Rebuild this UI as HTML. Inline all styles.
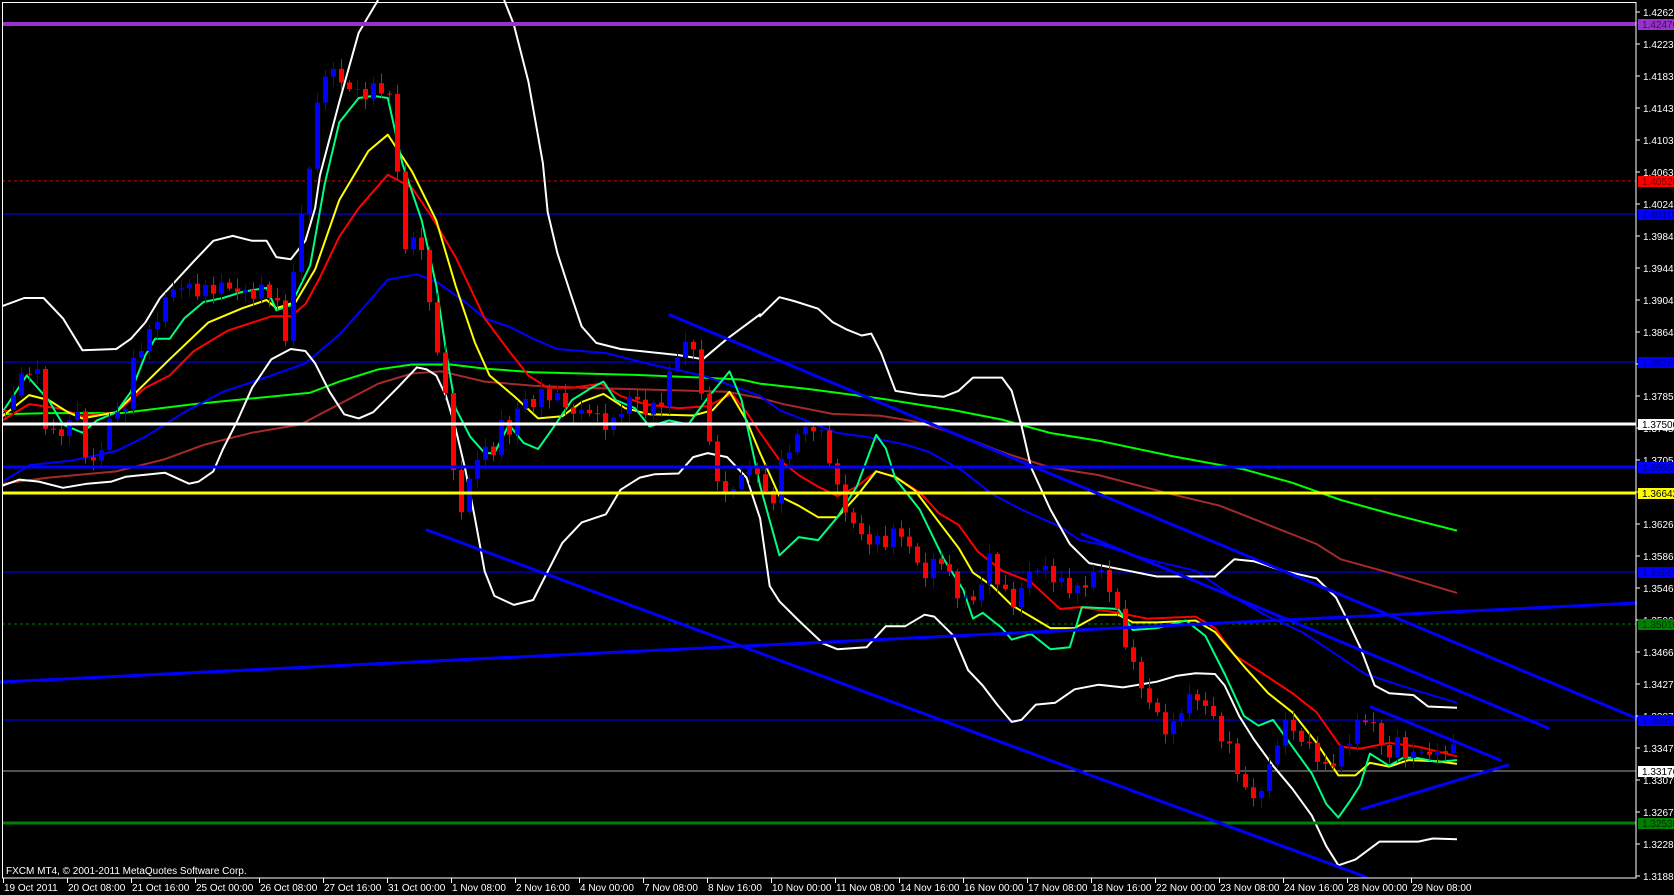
<!DOCTYPE html>
<html><head><meta charset="utf-8"><style>
html,body{margin:0;padding:0;background:#000;width:1674px;height:895px;overflow:hidden}
svg{display:block}
text{font-family:"Liberation Sans",sans-serif;font-size:10px}
</style></head><body>
<svg id="s" width="1674" height="895" xmlns="http://www.w3.org/2000/svg">
<rect x="0" y="0" width="1674" height="895" fill="#000"/>
<g id="hl">
<line x1="2" y1="181" x2="1636" y2="181" stroke="#e00000" stroke-width="1" stroke-dasharray="3,3"/>
<line x1="2" y1="214" x2="1636" y2="214" stroke="#0000ff" stroke-width="1"/>
<line x1="2" y1="362" x2="1636" y2="362" stroke="#0000ff" stroke-width="1"/>
<line x1="2" y1="572" x2="1636" y2="572" stroke="#0000ff" stroke-width="1"/>
<line x1="2" y1="624" x2="1636" y2="624" stroke="#008000" stroke-width="1" stroke-dasharray="3,3"/>
<line x1="2" y1="720" x2="1636" y2="720" stroke="#0000ff" stroke-width="1"/>
<line x1="2" y1="771" x2="1636" y2="771" stroke="#a0a0a0" stroke-width="1"/>
</g>
<g id="ind"></g>
<g id="cnd"></g>
<g id="thick">
<line x1="2" y1="24" x2="1636" y2="24" stroke="#9932cc" stroke-width="4"/>
<line x1="2" y1="424" x2="1636" y2="424" stroke="#ffffff" stroke-width="3"/>
<line x1="2" y1="467" x2="1636" y2="467" stroke="#0000ff" stroke-width="3"/>
<line x1="2" y1="493" x2="1636" y2="493" stroke="#ffff00" stroke-width="3"/>
<line x1="2" y1="823" x2="1636" y2="823" stroke="#008000" stroke-width="3"/>
</g>
<g id="tl" stroke="#0000ff" stroke-width="3" stroke-linecap="round">
<line x1="427" y1="530" x2="1366" y2="877"/>
<line x1="670" y1="315" x2="1636" y2="718"/>
<line x1="1082" y1="534" x2="1548" y2="728"/>
<line x1="0" y1="682" x2="1636" y2="603"/>
<line x1="1371" y1="707" x2="1500" y2="760"/>
<line x1="1362" y1="809" x2="1508" y2="765"/>
</g>
<rect x="2.5" y="2.5" width="1633.5" height="875.5" fill="none" stroke="#fff" stroke-width="1"/>
<g id="ax" fill="#fff"></g>
<text x="6" y="874" fill="#fff">FXCM MT4, © 2001-2011 MetaQuotes Software Corp.</text>
</svg>
<script>
var NS="http://www.w3.org/2000/svg";
function el(p,t,a,txt){var e=document.createElementNS(NS,t);for(var k in a)e.setAttribute(k,a[k]);if(txt!=null)e.textContent=txt;document.getElementById(p).appendChild(e);return e;}
function z6(a){var r=[];for(var i=0;i<a.length;i+=2)r.push([a[i]/2.063,a[i+1]/2.45]);return r;}
function z7(a){var r=[];for(var i=0;i<a.length;i+=2)r.push([760+a[i]/2.066,280+a[i+1]/2.614]);return r;}
function line(pts,col,w){el("ind","polyline",{points:pts.map(function(p){return p[0].toFixed(1)+","+p[1].toFixed(1)}).join(" "),fill:"none",stroke:col,"stroke-width":w,"stroke-linejoin":"round"});}
line(z6([5,1015,100,1012,250,1012,400,990,640,962,700,935,780,905,850,893,930,893,1000,903,1100,912,1300,918,1450,925,1530,930,1568,940]).concat(z7([100,285,250,310,400,340,500,365,600,400,700,420,850,460,1000,495,1100,530,1200,575,1300,610,1440,655])),"#00ff00",2);
line(z6([5,1185,100,1170,240,1155,340,1125,420,1090,520,1060,620,1040,700,990,780,940,850,915,910,910,1000,935,1100,945,1200,950,1350,955,1500,960,1568,975]).concat(z7([50,325,150,350,250,355,320,370,400,400,500,450,600,490,700,510,850,560,950,590,1050,640,1150,690,1200,730,1300,765,1440,818])),"#a52a2a",2);
line(z6([5,1180,60,1140,150,1128,240,1105,300,1070,380,1010,460,960,560,920,630,890,700,820,760,740,800,685,860,672,900,690,960,740,1000,780,1050,800,1100,830,1150,855,1250,865,1350,895,1450,920,1568,970]).concat(z7([40,340,100,370,160,400,220,410,300,430,350,450,420,500,480,560,540,600,620,645,660,680,700,690,800,730,900,760,980,830,1050,880,1120,920,1180,970,1250,1030,1300,1050,1360,1075,1440,1105])),"#0000ff",2);
line(z6([5,750,50,730,90,730,130,780,170,858,240,855,270,830,300,790,330,730,400,640,440,590,480,578,520,590,550,590,570,630,600,635,630,590,650,510,660,430,700,250,740,80,780,0]),"#fff",2);
line(z6([1040,0,1060,60,1090,200,1120,400,1130,520,1150,620,1180,730,1200,800,1230,840,1280,855,1400,870,1450,880,1500,830,1568,770]).concat(z7([0,95,40,45,70,55,120,75,150,110,180,130,210,145,230,140,250,190,280,290,330,300,380,305,410,290,440,255,500,255,520,290,540,380,560,490,600,600,640,690,680,740,760,760,820,775,940,775,980,730,1020,735,1080,760,1150,780,1190,830,1210,880,1240,960,1270,1060,1300,1080,1350,1085,1380,1115,1440,1118])),"#fff",2);
line(z6([5,1190,40,1175,80,1180,130,1195,180,1185,230,1180,260,1168,340,1158,390,1185,410,1180,440,1155,460,1100,490,1030,520,950,560,880,600,855,630,860,650,890,680,960,710,1015,740,1025,770,1010,820,950,860,900,880,905,900,920,920,970,940,1050,960,1150,980,1270,1000,1400,1020,1460,1060,1482,1100,1470,1130,1400,1160,1330,1200,1280,1250,1260,1280,1200,1320,1170,1350,1162,1400,1160,1430,1120,1460,1110,1500,1120,1540,1170,1568,1270]).concat(z7([20,800,40,840,80,890,130,950,160,965,220,960,260,905,300,905,340,875,360,880,400,930,430,1020,460,1060,490,1110,520,1155,540,1150,570,1110,610,1105,650,1070,700,1058,750,1065,820,1050,860,1035,900,1028,940,1030,960,1060,990,1140,1020,1200,1060,1270,1100,1330,1140,1400,1170,1480,1195,1530,1230,1515,1280,1468,1360,1468,1390,1460,1440,1462])),"#fff",2);
line(z6([5,1030,60,990,120,1000,170,1020,240,1010,300,950,350,920,400,860,470,810,560,775,600,775,630,745,660,680,700,580,740,510,800,428,850,460,890,530,940,630,1000,780,1050,860,1090,920,1130,950,1180,950,1240,940,1280,970,1330,990,1400,1000,1460,995,1510,965,1540,1010,1568,1060]).concat(z7([40,470,80,510,120,540,160,565,200,540,240,500,280,515,330,555,370,610,410,640,450,710,500,760,560,790,620,860,660,855,740,870,800,885,900,880,940,910,980,980,1040,1030,1100,1080,1150,1130,1200,1220,1240,1225,1300,1210,1360,1220,1440,1245])),"#ff0000",2);
line(z6([5,1020,60,968,100,980,140,1010,170,1025,240,1010,290,950,350,880,430,790,500,755,550,735,570,755,610,740,650,660,700,490,760,370,800,330,850,420,900,540,940,700,980,840,1010,920,1060,970,1110,1025,1160,1020,1200,985,1245,965,1290,1000,1340,1015,1430,1018,1470,1005,1505,960,1540,1030,1568,1110]).concat(z7([40,565,80,590,120,620,160,620,200,565,240,500,280,515,320,550,350,600,380,650,410,700,440,765,480,800,520,850,560,880,600,910,650,910,700,875,740,875,770,895,820,895,900,890,940,920,1000,1010,1050,1080,1100,1130,1150,1210,1195,1295,1230,1295,1260,1262,1300,1272,1340,1255,1400,1258,1440,1265])),"#ffff00",2);
line(z6([5,1010,55,920,100,980,130,1040,170,1060,200,1030,240,1010,270,960,300,870,320,830,350,830,380,780,420,740,460,730,500,715,550,705,570,760,600,748,640,650,670,450,700,300,740,240,770,235,800,240,830,400,870,540,900,700,920,860,940,1000,970,1070,1000,1110,1020,1110,1050,1040,1080,1085,1110,1100,1140,1050,1180,980,1220,950,1245,935,1270,980,1310,1000,1340,1045,1380,1030,1420,1040,1460,975,1505,910,1530,980,1568,1190]).concat(z7([40,720,80,672,120,680,160,620,200,540,240,405,260,440,280,520,330,600,380,730,420,810,440,885,460,870,500,910,520,940,560,925,600,965,640,960,665,855,740,860,770,915,820,910,880,890,920,930,960,1030,1000,1140,1030,1165,1060,1150,1100,1220,1140,1290,1170,1370,1195,1405,1220,1360,1240,1320,1260,1238,1300,1270,1330,1248,1360,1250,1400,1260,1440,1255])),"#00ff7f",2);
var P=[5,410,25,375,35,360,45,420,60,440,75,410,90,470,110,420,125,410,135,350,150,330,160,310,175,290,190,285,210,290,230,290,260,290,275,300,285,340,295,250,305,190,315,120,325,75,335,75,350,85,365,95,385,90,395,110,400,250,410,240,420,240,430,320,440,360,450,430,458,520,470,480,480,450,490,460,500,420,510,430,520,400,530,410,545,390,560,395,575,420,590,410,600,420,615,420,630,400,645,410,660,400,675,360,690,340,700,380,710,450,725,500,740,480,755,460,770,510,780,470,800,430,810,420,825,440,835,490,850,520,870,540,885,545,900,530,912,550,925,575,940,560,955,590,975,600,990,560,1000,590,1015,600,1030,570,1050,575,1070,585,1085,590,1095,570,1110,585,1125,640,1140,690,1160,720,1170,730,1185,700,1205,705,1215,720,1230,750,1245,795,1255,800,1265,780,1275,740,1290,720,1300,750,1310,740,1320,765,1335,760,1345,750,1360,720,1372,715,1385,760,1395,745,1410,760,1420,745,1435,755,1450,750,1458,760];
function pv(x){for(var i=0;i<P.length-2;i+=2){if(x<=P[i+2]){var t=(x-P[i])/(P[i+2]-P[i]);return P[i+1]+t*(P[i+3]-P[i+1]);}}return P[P.length-1];}
(function(){
var prev=pv(5);
for(var i=0;i<=181;i++){var x=5+8*i;var c=pv(x)+6*Math.sin(i*2.7)+4*Math.sin(i*5.3);var o=prev;prev=c;
var tp=Math.min(o,c),bt=Math.max(o,c);var hi=tp-2-8*Math.abs(Math.sin(i*1.9));var lo=bt+2+8*Math.abs(Math.cos(i*2.3));
var col=c<o?"#0000ff":"#ff0000";
el("cnd","line",{x1:x+0.5,y1:hi.toFixed(1),x2:x+0.5,y2:lo.toFixed(1),stroke:col,"stroke-width":1});
el("cnd","rect",{x:x-2,y:tp.toFixed(1),width:5,height:Math.max(1,bt-tp).toFixed(1),fill:col});}
var L=["1.42620","1.42230","1.41830","1.41430","1.41030","1.40630","1.40240","1.39840","1.39440","1.39040","1.38640","1.38250","1.37850","1.37450","1.37050","1.36660","1.36260","1.35860","1.35460","1.35060","1.34660","1.34270","1.33870","1.33470","1.33070","1.32670","1.32280","1.31880"];
for(var i=0;i<L.length;i++){var y=12+32*i;el("ax","line",{x1:1636,y1:y,x2:1640,y2:y,stroke:"#fff","stroke-width":1});el("ax","text",{x:1643,y:y+4},L[i]);}
var B=[[24,"#9932cc","#3a1050","1.42470"],[181,"#ff0000","#800000","1.40520"],[214,"#0000ff","#000080","1.40110"],[362,"#0000ff","#000080","1.38260"],[424,"#ffffff","#000","1.37500"],[467,"#0000ff","#000080","1.36960"],[493,"#ffff00","#000","1.36642"],[572,"#0000ff","#000080","1.35660"],[624,"#008000","#003000","1.35010"],[720,"#0000ff","#000080","1.33810"],[771,"#ffffff","#000","1.33176"],[823,"#008000","#003000","1.32530"]];
B.forEach(function(b){el("ax","rect",{x:1638,y:b[0]-5,width:36,height:11,fill:b[1]});el("ax","text",{x:1642,y:b[0]+4,fill:b[2]},b[3]);});
var T=["19 Oct 2011","20 Oct 08:00","21 Oct 16:00","25 Oct 00:00","26 Oct 08:00","27 Oct 16:00","31 Oct 00:00","1 Nov 08:00","2 Nov 16:00","4 Nov 00:00","7 Nov 08:00","8 Nov 16:00","10 Nov 00:00","11 Nov 08:00","14 Nov 16:00","16 Nov 00:00","17 Nov 08:00","18 Nov 16:00","22 Nov 00:00","23 Nov 08:00","24 Nov 16:00","28 Nov 00:00","29 Nov 08:00"];
for(var i=0;i<T.length;i++){var x=3+64*i;el("ax","line",{x1:x+0.5,y1:878,x2:x+0.5,y2:883,stroke:"#fff","stroke-width":1});el("ax","text",{x:x+1,y:891},T[i]);}
})();
</script>
</body></html>
